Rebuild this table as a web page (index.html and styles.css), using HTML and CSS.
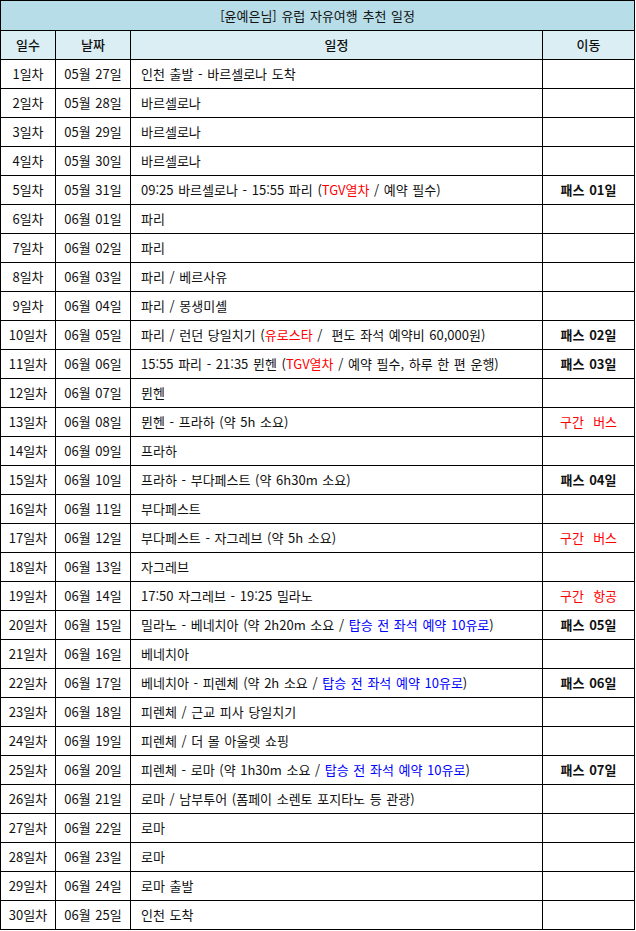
FILE: index.html
```html
<!DOCTYPE html>
<html lang="ko">
<head>
<meta charset="utf-8">
<link rel="stylesheet" href="styles.css">
</head>
<body>
<table class="plan">
<colgroup><col class="c-day"><col class="c-date"><col class="c-plan"><col class="c-move"></colgroup>
<thead>
<tr class="title"><th colspan="4">[윤예은님] 유럽 자유여행 추천 일정</th></tr>
<tr class="head"><th>일수</th><th>날짜</th><th>일정</th><th>이동</th></tr>
</thead>
<tbody>
<tr><td>1일차</td><td>05월 27일</td><td class="p">인천 출발 - 바르셀로나 도착</td><td></td></tr>
<tr><td>2일차</td><td>05월 28일</td><td class="p">바르셀로나</td><td></td></tr>
<tr><td>3일차</td><td>05월 29일</td><td class="p">바르셀로나</td><td></td></tr>
<tr><td>4일차</td><td>05월 30일</td><td class="p">바르셀로나</td><td></td></tr>
<tr><td>5일차</td><td>05월 31일</td><td class="p">09:25 바르셀로나 - 15:55 파리 (<span class="red">TGV열차</span> / 예약 필수)</td><td class="pass">패스 01일</td></tr>
<tr><td>6일차</td><td>06월 01일</td><td class="p">파리</td><td></td></tr>
<tr><td>7일차</td><td>06월 02일</td><td class="p">파리</td><td></td></tr>
<tr><td>8일차</td><td>06월 03일</td><td class="p">파리 / 베르사유</td><td></td></tr>
<tr><td>9일차</td><td>06월 04일</td><td class="p">파리 / 몽생미셸</td><td></td></tr>
<tr><td>10일차</td><td>06월 05일</td><td class="p">파리 / 런던 당일치기 (<span class="red">유로스타</span> / &nbsp;편도 좌석 예약비 60,000원)</td><td class="pass">패스 02일</td></tr>
<tr><td>11일차</td><td>06월 06일</td><td class="p">15:55 파리 - 21:35 뮌헨 (<span class="red">TGV열차</span> / 예약 필수, 하루 한 편 운행)</td><td class="pass">패스 03일</td></tr>
<tr><td>12일차</td><td>06월 07일</td><td class="p">뮌헨</td><td></td></tr>
<tr><td>13일차</td><td>06월 08일</td><td class="p">뮌헨 - 프라하 (약 5h 소요)</td><td class="red">구간 &nbsp;버스</td></tr>
<tr><td>14일차</td><td>06월 09일</td><td class="p">프라하</td><td></td></tr>
<tr><td>15일차</td><td>06월 10일</td><td class="p">프라하 - 부다페스트 (약 6h30m 소요)</td><td class="pass">패스 04일</td></tr>
<tr><td>16일차</td><td>06월 11일</td><td class="p">부다페스트</td><td></td></tr>
<tr><td>17일차</td><td>06월 12일</td><td class="p">부다페스트 - 자그레브 (약 5h 소요)</td><td class="red">구간 &nbsp;버스</td></tr>
<tr><td>18일차</td><td>06월 13일</td><td class="p">자그레브</td><td></td></tr>
<tr><td>19일차</td><td>06월 14일</td><td class="p">17:50 자그레브 - 19:25 밀라노</td><td class="red">구간 &nbsp;항공</td></tr>
<tr><td>20일차</td><td>06월 15일</td><td class="p">밀라노 - 베네치아 (약 2h20m 소요 / <span class="blue">탑승 전 좌석 예약 10유로</span>)</td><td class="pass">패스 05일</td></tr>
<tr><td>21일차</td><td>06월 16일</td><td class="p">베네치아</td><td></td></tr>
<tr><td>22일차</td><td>06월 17일</td><td class="p">베네치아 - 피렌체 (약 2h 소요 / <span class="blue">탑승 전 좌석 예약 10유로</span>)</td><td class="pass">패스 06일</td></tr>
<tr><td>23일차</td><td>06월 18일</td><td class="p">피렌체 / 근교 피사 당일치기</td><td></td></tr>
<tr><td>24일차</td><td>06월 19일</td><td class="p">피렌체 / 더 몰 아울렛 쇼핑</td><td></td></tr>
<tr><td>25일차</td><td>06월 20일</td><td class="p">피렌체 - 로마 (약 1h30m 소요 / <span class="blue">탑승 전 좌석 예약 10유로</span>)</td><td class="pass">패스 07일</td></tr>
<tr><td>26일차</td><td>06월 21일</td><td class="p">로마 / 남부투어 (폼페이 소렌토 포지타노 등 관광)</td><td></td></tr>
<tr><td>27일차</td><td>06월 22일</td><td class="p">로마</td><td></td></tr>
<tr><td>28일차</td><td>06월 23일</td><td class="p">로마</td><td></td></tr>
<tr><td>29일차</td><td>06월 24일</td><td class="p">로마 출발</td><td></td></tr>
<tr><td>30일차</td><td>06월 25일</td><td class="p">인천 도착</td><td></td></tr>
</tbody>
</table>
</body>
</html>
```
FILE: styles.css
```css
html, body {
  margin: 0;
  padding: 0;
  background: #fff;
}
body {
  font-family: "Noto Sans CJK KR", "Noto Sans", sans-serif;
  font-size: 13px;
  color: #111;
}
.plan {
  border-collapse: collapse;
  table-layout: fixed;
  width: 634px;
}
.c-day { width: 55px; }
.c-date { width: 75px; }
.c-plan { width: 412px; }
.c-move { width: 92px; }
.plan th, .plan td {
  border: 1px solid #000;
  height: 28px;
  padding: 0;
  text-align: center;
  vertical-align: middle;
  line-height: 16px;
  white-space: nowrap;
  overflow: hidden;
  font-weight: normal;
  word-spacing: 1px;
}
.title th {
  background: #b7dde8;
  height: 29px;
}
.head th {
  background: #daeef3;
  font-weight: 500;
}
.plan td.p {
  text-align: left;
  padding-left: 10px;
}
.pass {
  font-weight: bold !important;
}
.red { color: #ff0000; }
.blue { color: #0000ff; }
```
